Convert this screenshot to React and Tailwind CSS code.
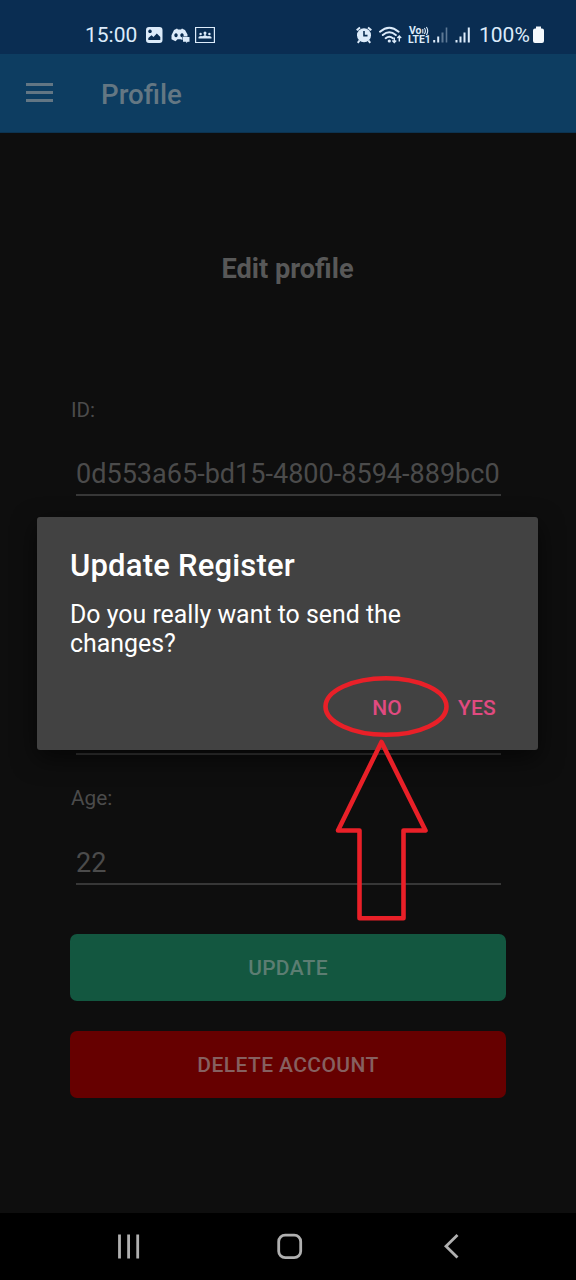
import React from "react";

function StatusBar() {
  return (
    <header className="flex h-[54px] items-center bg-[#0a2d52] pt-[16px] pl-[85px] text-[#dcebfa]">
      <span className="w-[61px] pt-px text-[21px] leading-[37px]">15:00</span>
      <svg className="w-[72px] shrink-0" height="20" viewBox="0 0 72 20" fill="currentColor">
        <path fillRule="evenodd" d="M3 2h10.500a3 3 0 0 1 3 3v10a3 3 0 0 1-3 3H3a3 3 0 0 1-3-3V5a3 3 0 0 1 3-3Zm1 2.500a1.800 1.800 0 1 0 .01 0ZM2.300 15h12v-3L10.800 8.500 7.500 12 5.500 10.300 2.300 13Z" />
        <path fillRule="evenodd" d="M28 5l3-1.500 1 1h3l1-1L39 5l2.500 4.500v2h-5v3.500l-2-.800h-3l-2 2-4-2v-4Zm2 3.300a1.700 2 0 1 0 .01 0ZM36 8.300a1.700 2 0 1 0 .01 0Z" />
        <path d="M37 12h6.500v4.700h-1.800l-1.400 1.500v-1.500H37Z" />
        <path d="M49.600 2.500h18.800v15H49.600Z" fill="none" stroke="currentColor" strokeWidth="1.200" />
        <circle cx="59" cy="8" r="1.500" />
        <circle cx="54.600" cy="9" r="1.200" />
        <circle cx="63.400" cy="9" r="1.200" />
        <path d="M58.300 8h1.400v4h-1.400ZM52.500 13.600v-1.600q2-1.500 3.700-.8 2.800-1.600 5.600 0 1.700-.7 3.700.8v1.600Z" />
      </svg>
      <div className="flex-1" />
      <svg className="mr-[2px] w-[51px] shrink-0" height="20" viewBox="0 0 51 20" fill="none" stroke="currentColor">
        <circle cx="9" cy="10.200" r="7" fill="currentColor" stroke="none" />
        <path d="M1.700 5.200 5 2.400M16.300 5.200 13 2.400M4.500 15.500 2.800 17.800M13.500 15.500 15.200 17.800" strokeWidth="2" />
        <path d="M9 6v4.600h3.500" stroke="#0a2d52" strokeWidth="1.600" />
        <path d="M25 6.700q9.300-8 18.600 0M27.800 10q6.500-5.500 13 0M30.700 13.200q3.600-3 7.200 0" strokeWidth="2" strokeLinecap="round" />
        <circle cx="34.300" cy="16" r="1.600" fill="currentColor" stroke="none" />
        <path d="M39.300 12.500v5M37.400 15.600l1.900 2 1.900-2M44.300 16.500v-5.500M42.400 12.900l1.900-2 1.900 2" strokeWidth="1.400" />
      </svg>
      <div className="flex w-[24px] shrink-0 flex-col pt-px text-[10.400px] leading-[10px] font-bold">
        <div className="flex h-[9px] items-center pl-px">
          <span className="text-[10.500px]">Vo</span>
          <svg width="7" height="9" viewBox="0 0 7 9" fill="none" stroke="currentColor" strokeWidth="1.100">
            <path d="M.800 3v4.500M2.400 2q2 3 0 6M4.400 1q2.600 4 0 8" />
          </svg>
        </div>
        <span className="leading-[10px]">LTE1</span>
      </div>
      <svg className="w-[47px] shrink-0" height="20" viewBox="0 0 47 20" fill="currentColor">
        <path d="M1.200 15h2v2.500h-2ZM5.200 11.500h2v6h-2Z" />
        <path d="M9.500 7.500h2v10h-2ZM13.700 2.500h1.600v15h-1.600Z" opacity=".4" />
        <path d="M23.500 15h2v2.500h-2ZM27.500 11.500h2v6h-2ZM31.500 7.500h2v10h-2ZM35.800 2.500h2v15h-2Z" />
      </svg>
      <span className="w-[54px] shrink-0 pt-px text-[21px] leading-[37px]">100%</span>
      <svg className="mr-[32px] w-[11px] shrink-0" height="20" viewBox="0 0 11 20" fill="#f4f8fc">
        <path d="M3 1.500h5v2h1a2 2 0 0 1 2 2v10.500a2 2 0 0 1-2 2H2a2 2 0 0 1-2-2V5.500a2 2 0 0 1 2-2h1Z" />
      </svg>
    </header>
  );
}

function AppBar() {
  return (
    <div className="flex h-[79px] items-center border-b border-[#0c3350] bg-[#0d3d61] pl-[26px]">
      <div className="flex w-[75px] flex-col gap-[5px] pb-[2px]">
        <div className="h-[3px] w-[27px] bg-[#627684]" />
        <div className="h-[3px] w-[27px] bg-[#627684]" />
        <div className="h-[3px] w-[27px] bg-[#627684]" />
      </div>
      <h1 className="pt-[3px] text-[27.700px] leading-8 font-medium text-[#647783]">Profile</h1>
    </div>
  );
}

function ProfileForm() {
  return (
    <main className="flex h-[1080px] flex-col bg-[#0e0e0e] px-[70px] text-[#4b4b4b]">
      <h2 className="mt-[120px] pr-px text-center text-[27.200px] leading-8 font-bold text-[#585858]">Edit profile</h2>
      <div className="mt-[113px] pl-px text-[20.600px] leading-6">ID:</div>
      <div className="mx-[6px] mt-[36px] h-[38px] w-[425px] border-b-2 border-[#373737] text-[27.050px] leading-8 whitespace-nowrap">
        0d553a65-bd15-4800-8594-889bc0
      </div>
      <div className="mx-[6px] mt-[221px] h-[38px] w-[425px] border-b-2 border-[#373737]" />
      <div className="mt-[31px] pl-px text-[20.800px] leading-6">Age:</div>
      <div className="mx-[6px] mt-[37px] h-[38px] w-[425px] border-b-2 border-[#373737] text-[27.050px] leading-8">22</div>
      <button className="mt-[49px] h-[67px] shrink-0 rounded-[7px] bg-[#135740] pt-[2px] text-[21px] font-medium tracking-[0.3px] text-[#5c7d72]">UPDATE</button>
      <button className="mt-[30px] h-[67px] shrink-0 rounded-[7px] bg-[#660000] pt-[2px] text-[21px] font-medium tracking-[0.4px] text-[#866060]">DELETE ACCOUNT</button>
    </main>
  );
}

function ConfirmDialog() {
  return (
    <section role="dialog" className="absolute top-[517px] left-[37px] flex h-[233px] w-[501px] flex-col rounded-[3px] bg-[#424242] px-[33px] shadow-[0_8px_24px_rgba(0,0,0,0.6)]">
      <h2 className="mt-[33px] text-[31px] leading-8 font-medium tracking-[0.200px] text-white">Update Register</h2>
      <p className="mt-[18px] text-[24.900px] leading-[29px] text-white">
        Do you really want to send the
        <br />
        changes?
      </p>
      <div className="mt-[34px] flex justify-end gap-[56px] pr-[9px] text-[21px] leading-8 font-medium tracking-[0.2px] text-[#e04a80]">
        <button>NO</button>
        <button>YES</button>
      </div>
    </section>
  );
}

function Annotation() {
  return (
    <svg className="absolute top-[670px] left-[315px]" width="145" height="260" viewBox="315 670 145 260" fill="none" stroke="#e92028" strokeWidth="4.600">
      <ellipse cx="386" cy="706.500" rx="60.500" ry="28.300" />
      <path d="M381.500 742 425.500 830.500H403.500V918.300H359.500V830.500H338Z" strokeLinejoin="round" />
    </svg>
  );
}

function NavigationBar() {
  return (
    <nav className="flex h-[67px] items-center bg-black">
      <svg width="576" height="67" viewBox="0 0 576 67" fill="none" stroke="#b0b0b0" strokeWidth="2.800">
        <path d="M119.500 21.500v24M128.600 21.500v24M137.700 21.500v24" />
        <rect x="278.700" y="22.200" width="22" height="22.500" rx="6.500" />
        <path d="M457.500 22 446 33.200l11.500 11.300" />
      </svg>
    </nav>
  );
}

export default function App() {
  return (
    <div className="relative flex h-[1280px] w-[576px] flex-col overflow-hidden bg-[#0e0e0e] font-['Roboto',sans-serif]">
      <StatusBar />
      <AppBar />
      <ProfileForm />
      <NavigationBar />
      <ConfirmDialog />
      <Annotation />
    </div>
  );
}
